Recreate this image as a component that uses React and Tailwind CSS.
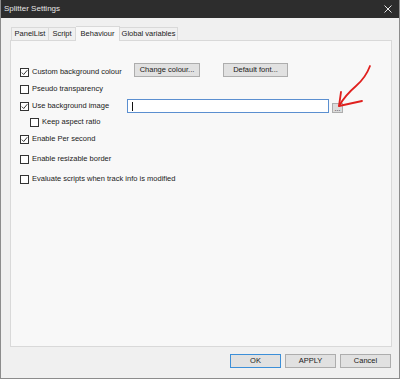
import React from "react";

const F = { fontFamily: '"Liberation Sans", Arial, sans-serif' };

function Box({ checked }) {
  return (
    <div className="w-[9px] h-[9px] border border-[#333] bg-white flex items-center justify-center shrink-0">
      {checked && (
        <svg width="7" height="7" viewBox="0 0 7 7">
          <path d="M0.8 3.6 L2.7 5.5 L6.3 1.2" stroke="#222" strokeWidth="0.9" fill="none" />
        </svg>
      )}
    </div>
  );
}

function Check({ checked, label, w }) {
  return (
    <div className={`flex items-center gap-[3px] h-[16px] ${w || ""}`}>
      <Box checked={checked} />
      <span className="text-[7.5px] text-[#1a1a1a] leading-none whitespace-nowrap">{label}</span>
    </div>
  );
}

function Btn({ children, w, def }) {
  return (
    <div
      className={`${w} h-[14px] flex items-center justify-center text-[7.5px] text-[#1a1a1a] leading-none whitespace-nowrap bg-[#e1e1e1] border ${
        def ? "border-[#3c8fd8]" : "border-[#adadad]"
      }`}
    >
      {children}
    </div>
  );
}

const tab = "flex items-center justify-center text-[7.5px] leading-none text-[#1a1a1a] whitespace-nowrap border border-b-0 border-[#d9d9d9]";

export default function App() {
  return (
    <div style={F} className="relative w-[400px] h-[379px] bg-[#f0f0f0] border-l border-r border-b border-[#8c8c8c] flex flex-col overflow-hidden">
      {/* Title bar */}
      <div className="h-[18px] bg-[#2d2d2d] flex items-center justify-between pl-[3px] pr-[7px] shrink-0">
        <span className="text-[8px] text-[#e6e6e6] leading-none">Splitter Settings</span>
        <svg width="8" height="8" viewBox="0 0 8 8">
          <path d="M0.5 0.5 L7.5 7.5 M7.5 0.5 L0.5 7.5" stroke="#e6e6e6" strokeWidth="1" />
        </svg>
      </div>

      {/* Tabs */}
      <div className="flex items-end ml-[10px] mt-[7px] h-[15px] shrink-0">
        <div className={`${tab} h-[13px] w-[38px]`}>PanelList</div>
        <div className={`${tab} h-[13px] w-[27px] border-l-0`}>Script</div>
        <div className={`${tab} h-[15px] w-[44px] border-l-0 bg-[#f8f8f8] -mb-px relative z-10`}>Behaviour</div>
        <div className={`${tab} h-[13px] w-[58px] border-l-0`}>Global variables</div>
      </div>

      {/* Panel */}
      <div className="ml-[9px] w-[382px] h-[307px] border border-[#d9d9d9] bg-[#f8f8f8] pt-[22px] pl-[9px] flex flex-col shrink-0">
        <div className="flex items-start h-[18px]">
          <div className="w-[114px] h-[18px] flex items-center">
            <Check checked label="Custom background colour" />
          </div>
          <Btn w="w-[66px]">Change colour...</Btn>
          <div className="w-[23px]" />
          <Btn w="w-[65px]">Default font...</Btn>
        </div>
        <Check label="Pseudo transparency" />
        <div className="flex items-center h-[16px] mt-[1px]">
          <Check checked label="Use background image" w="w-[107px]" />
          <div className="flex items-end gap-[3px]">
            <div className="w-[202px] h-[14px] bg-white border border-[#5b8fd0] flex items-center pl-[4px]">
              <div className="w-px h-[9px] bg-[#111]" />
            </div>
            <div className="w-[11px] h-[10px] bg-[#dcdcdc] border border-[#adadad] flex items-end justify-center text-[7px] leading-[6px] text-[#222]">...</div>
          </div>
        </div>
        <div className="pl-[10px]">
          <Check label="Keep aspect ratio" />
        </div>
        <div className="mt-[1px]">
          <Check checked label="Enable Per second" />
        </div>
        <div className="mt-[4px]">
          <Check label="Enable resizable border" />
        </div>
        <div className="mt-[4px]">
          <Check label="Evaluate scripts when track info is modified" />
        </div>
      </div>

      {/* Bottom buttons */}
      <div className="flex justify-end gap-[4px] mt-[7px] mr-[8px]">
        <Btn w="w-[51px]" def>OK</Btn>
        <Btn w="w-[51px]">APPLY</Btn>
        <Btn w="w-[51px]">Cancel</Btn>
      </div>

      {/* Red annotation arrow */}
      <svg className="absolute left-0 top-0 pointer-events-none" width="400" height="379" viewBox="0 0 400 379">
        <path d="M369 66 C366 74 362 80 355 86 C348 92 342 99 338 106" stroke="#e0201e" strokeWidth="1.8" fill="none" strokeLinecap="round" />
        <path d="M340 92 L338 106 L361 101" stroke="#e0201e" strokeWidth="1.8" fill="none" strokeLinecap="round" strokeLinejoin="round" />
      </svg>
    </div>
  );
}
